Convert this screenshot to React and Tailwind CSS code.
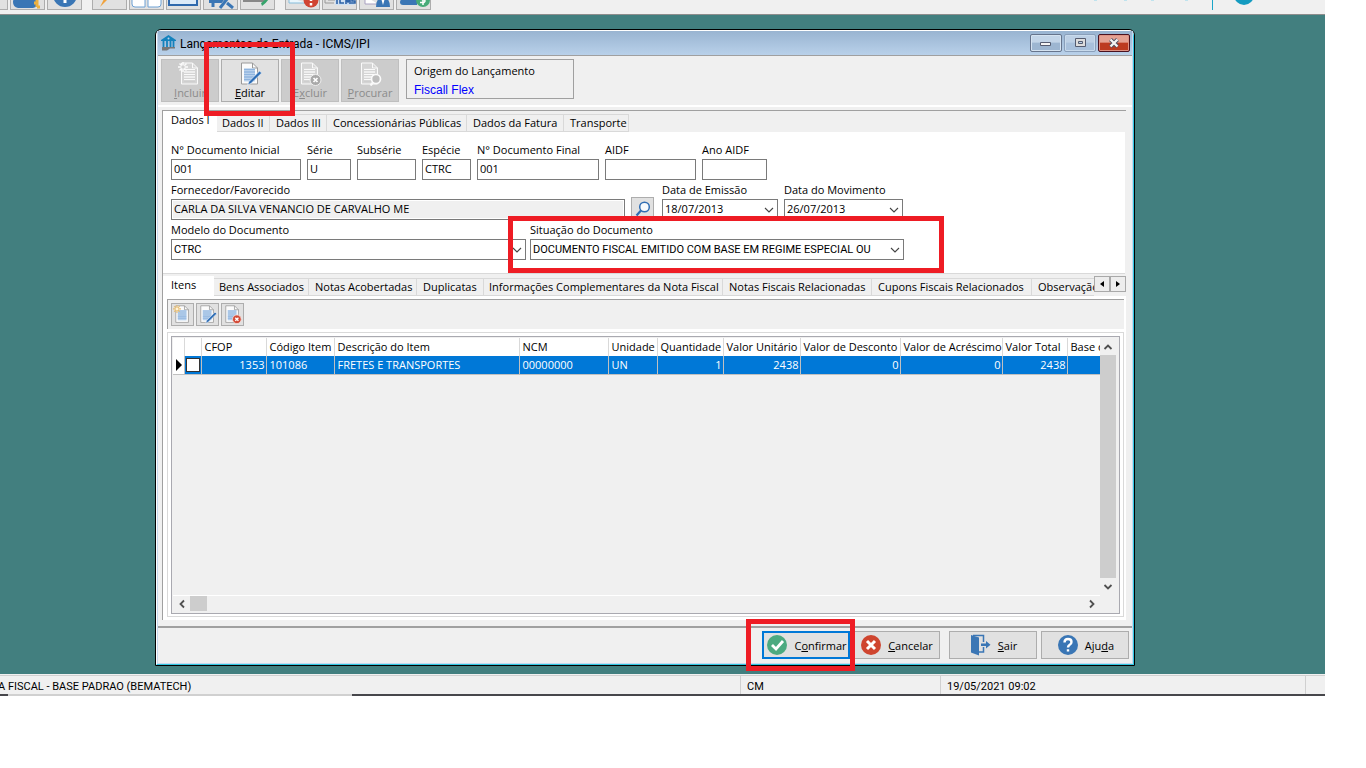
import React from "react";

const UI = "font-['Open_Sans','Noto_Sans',sans-serif]";

function Doc({ children, size = "size-6", dim = false }) {
  return (
    <svg viewBox="0 0 24 24" className={`${size} shrink-0`} aria-hidden="true">
      <path d="M3.500 1h11l5 5v16h-16z" fill={dim ? "#d4d4d4" : "#fbfbfb"} stroke={dim ? "#fafafa" : "#9a9a9a"} />
      <path d="M14.500 1v5h5" fill="none" stroke={dim ? "#fafafa" : "#9a9a9a"} />
      <path d="M6 6.500h11v13H6z" fill={dim ? "#c9c9c9" : "#c4daf1"} />
      <path d="M6 7.500h11M6 10h11M6 12.500h11M6 15h11M6 17.500h11" stroke={dim ? "#fafafa" : "#8fb4de"} strokeWidth="1.300" />
      {children}
    </svg>
  );
}

function DocNew({ dim, size }) {
  return (
    <Doc dim={dim} size={size}>
      <path d="M5 0v10M0 5h10M1.500 1.500l7 7M8.500 1.500l-7 7" stroke={dim ? "#fafafa" : "#e8bd72"} strokeWidth="1.500" />
      <circle cx="5" cy="5" r="1.800" fill={dim ? "#cfcfcf" : "#fff3d6"} />
    </Doc>
  );
}

function DocEdit({ size }) {
  return (
    <Doc size={size}>
      <path d="M9.500 23l1.500-3.500L21.500 9l2.200 2L13 21.500z" fill="#2d6db5" stroke="#eef3fa" strokeWidth=".7" />
    </Doc>
  );
}

function DocDelete({ dim, size }) {
  return (
    <Doc dim={dim} size={size}>
      <circle cx="17.500" cy="18" r="5.500" fill={dim ? "#a9a9a9" : "#d24a36"} stroke={dim ? "#eee" : "#f6dcd8"} />
      <path d="M15.500 16l4 4M19.500 16l-4 4" stroke="#fff" strokeWidth="1.700" />
    </Doc>
  );
}

function DocFind() {
  return (
    <Doc dim>
      <circle cx="18" cy="17" r="4.500" fill="#bdbdbd" stroke="#fafafa" strokeWidth="1.700" />
      <path d="M15 20.500l-2.500 3" stroke="#fafafa" strokeWidth="2.200" />
    </Doc>
  );
}

function Chevron({ className = "" }) {
  return (
    <svg viewBox="0 0 10 6" className={`h-1.5 w-2.5 ${className}`} aria-hidden="true">
      <path d="M1 1l4 4 4-4" fill="none" stroke="#444" strokeWidth="1.100" />
    </svg>
  );
}

const Highlight = ({ className }) => (
  <span aria-hidden="true" className={`pointer-events-none absolute z-10 border-[5px] border-[#ee1c24] ${className}`} />
);

const mainIcons = [
  ["Clientes", "", <><path d="M2 0q0-4 5-6h14q6 2 6 6 0 5-5 6H7q-5-1-5-6z" fill="#3a76b5" /><path d="M26-6v11M23 1h4M26 5h3" stroke="#eeb13f" strokeWidth="3" /></>],
  ["Informações", "", <><circle cx="17" cy="-7" r="12" fill="#3a76b5" /><path d="M17-7v8" stroke="#fff" strokeWidth="3" /></>],
  ["Atalhos", "ml-2", <path d="M17-5L7 5l5-10z" fill="#f0a23c" />],
  ["Livros", "", <path d="M2-6h13v11H5q-3 0-3-3zM18-6h13v8q0 3-3 3H18z" fill="#fff" stroke="#6fa2d5" />],
  ["Monitor", "", <path d="M2-6v9h28v-9" fill="#dceaf8" stroke="#2f69ad" strokeWidth="2" />],
  ["Ajustes", "", <><path d="M5-6h15v7H5z" fill="#3a76b5" /><path d="M9 1v4" stroke="#3a76b5" strokeWidth="3" /><path d="M16 7L28-8" stroke="#e1e1e1" strokeWidth="5" /><path d="M16 6L27-8" stroke="#3a76b5" strokeWidth="3" /><path d="M23 1l6 5" stroke="#3a76b5" strokeWidth="3" /></>],
  ["Exportar", "", <><path d="M3-6v5h20" fill="none" stroke="#888" strokeWidth="2" /><path d="M21 4q6-4 8-10h-4q-1 5-5 7z" fill="#36a36b" /></>],
  ["Alertas", "ml-2", <><path d="M3-5v6h17" fill="#eaf6fc" stroke="#86bddb" /><circle cx="25" cy="-2" r="7.500" fill="#d04432" /><path d="M25-8v7M25 1v2.500" stroke="#fff" strokeWidth="2.500" /></>],
  ["ICMS", "", <><path d="M2-6v7h9M5-2h7" fill="none" stroke="#999" /><path d="M12-4h19v7H12z" fill="#cfe0f2" /><path d="M14-4v6M21-3h-4v4h4M23 2v-5l2 3 2-3v5M32-3h-3v2h3v2h-4" fill="none" stroke="#2d62a7" strokeWidth="1.600" /></>],
  ["Contador", "", <><path d="M5-6v8h13" fill="#fff" stroke="#a9a0c0" /><path d="M8-3h8" stroke="#999" /><path d="M16 5q0-7 4-9h6q4 2 4 9z" fill="#3a76b5" /><path d="M21-4l2 7 2-7z" fill="#fff" /></>],
  ["Financeiro", "", <><path d="M3 0q1-5 7-6h10v9H6q-3 0-3-3z" fill="#3a76b5" /><circle cx="26" cy="-2" r="7" fill="#46ab78" /><path d="M29-5h-4q-2 1 0 2.500h2q2 1.500 0 3h-4M26-8V3" fill="none" stroke="#fff" strokeWidth="1.500" /></>],
];

function MainToolbar() {
  return (
    <header className="flex h-[15px] items-end overflow-hidden border-b border-[#8d8d8d] bg-[#f0f0f0] pb-1">
      <span className="h-10 w-2 shrink-0 border-r border-b border-[#adadad] bg-[#e1e1e1]" />
      <div className="flex gap-0.5 pl-0.5">
        {mainIcons.map(([name, gap, art]) => (
          <button key={name} aria-label={name} className={`flex h-10 w-[35px] items-end border border-[#adadad] bg-[#e1e1e1] ${gap}`}>
            <svg viewBox="0 -31 33 38" className="h-[38px] w-full">{art}</svg>
          </button>
        ))}
      </div>
      <div className="mr-[70px] ml-auto flex items-end">
        <svg viewBox="0 0 120 10" className="h-2.5 w-[120px]" aria-hidden="true">
          <path d="M2 0h3M32 0h3M59 0h3M93 0h3" stroke="#bfe3ee" strokeWidth="2" />
        </svg>
        <span className="mr-5 h-3 w-px shrink-0 bg-[#1aa5c8]" />
        <svg viewBox="0 0 22 10" className="h-2.5 w-[22px]" aria-hidden="true">
          <circle cx="11" cy="-5" r="10" fill="#149bc0" />
        </svg>
      </div>
    </header>
  );
}

function TitleBar() {
  return (
    <div className="flex h-[25px] items-center border-b border-[#a0a0a0] bg-linear-to-b from-[#99b4d1] to-[#b9d1ea] pr-0.5 pl-[3px]">
      <svg viewBox="0 0 15 16" className="h-4 w-[15px]" aria-hidden="true">
        <path d="M0 5l7.500-5L15 5v1H0z" fill="#1382bd" />
        <path d="M2.500 6v6M6 6v6M9.500 6v6M12.500 6v6" stroke="#1382bd" strokeWidth="1.800" />
        <path d="M1 12h13v1.500H9L6 15.500H1z" fill="#777" />
        <circle cx="7.500" cy="3.500" r="1" fill="#b9d1ea" />
      </svg>
      <h1 className="pt-0.5 pl-1 font-['Roboto',sans-serif] text-[12px]">Lançamentos de Entrada - ICMS/IPI</h1>
      <div className="ml-auto flex gap-0.5">
        <button aria-label="Minimizar" className="flex h-[18px] w-8 items-center justify-center rounded-xs border border-[#66748c] bg-linear-to-b from-[#c3d5e8] from-45% to-[#9db6d1] to-50% inset-ring inset-ring-[#d5e3f1]">
          <svg viewBox="0 0 12 8" className="h-2 w-3"><path d="M.5 3.500h10v3H.5z" fill="#f5f5f5" stroke="#555c70" /></svg>
        </button>
        <button aria-label="Maximizar" className="flex h-[18px] w-8 items-center justify-center rounded-xs border border-[#8a9fba] bg-linear-to-b from-[#bdd0e5] from-45% to-[#a9c1dc] to-50% inset-ring inset-ring-[#c8daec]">
          <svg viewBox="0 0 11 10" className="h-2.5 w-[11px]"><path d="M.5.5h10v8H.5z" fill="#ddd" stroke="#555c70" /><path d="M3.500 3.500h4v2h-4z" fill="#b9d1ea" stroke="#555c70" /></svg>
        </button>
        <button aria-label="Fechar" className="flex h-[18px] w-8 items-center justify-center rounded-xs border border-[#4a1220] bg-linear-to-b from-[#e5a192] from-45% to-[#bc3a20] to-50% inset-ring inset-ring-[#dd9284]">
          <svg viewBox="0 0 12 10" className="h-2.5 w-3"><path d="M2.500 1.500l7 7M9.500 1.500l-7 7" stroke="#4d4f63" strokeWidth="4" /><path d="M2.500 1.500l7 7M9.500 1.500l-7 7" stroke="#f4f4f4" strokeWidth="2.300" /></svg>
        </button>
      </div>
    </div>
  );
}

function ToolButton({ icon, children, disabled }) {
  return (
    <button
      disabled={disabled}
      className={`flex h-[43px] w-[58px] flex-col items-center border pt-0.5 leading-[14px] ${disabled ? "border-[#bfbfbf] bg-[#cccccc] text-[#8b8b8b]" : "border-[#adadad] bg-[#e1e1e1] text-black"}`}
    >
      {icon}
      <span>{children}</span>
    </button>
  );
}

function Actions() {
  return (
    <div className="flex h-[51px] items-start border-b-2 border-white pt-[3px] pl-[3px]">
      <div className="flex gap-0.5">
        <ToolButton disabled icon={<DocNew dim />}><u>I</u>ncluir</ToolButton>
        <div className="relative">
          <ToolButton icon={<DocEdit />}><u>E</u>ditar</ToolButton>
          <Highlight className="-top-[17px] -left-[17px] h-[74px] w-[91px]" />
        </div>
        <ToolButton disabled icon={<DocDelete dim />}>E<u>x</u>cluir</ToolButton>
        <ToolButton disabled icon={<DocFind />}><u>P</u>rocurar</ToolButton>
      </div>
      <div className="ml-[7px] h-10 w-[168px] border border-[#a0a0a0] px-[7px] pt-0.5">
        <p className="leading-[18px]">Origem do Lançamento</p>
        <p className="font-['Liberation_Sans',sans-serif] text-[12px] leading-[20px] text-[#0000ff]">Fiscall Flex</p>
      </div>
    </div>
  );
}

function Tab({ active, className, children }) {
  return (
    <button
      role="tab"
      aria-selected={!!active}
      className={`shrink-0 text-left whitespace-nowrap ${active ? "h-full bg-white pb-0.5 pl-2" : "h-[18px] border-t border-r border-b border-[#d9d9d9] pl-[5px]"} ${className}`}
    >
      {children}
    </button>
  );
}

function Field({ label, id, className, children }) {
  return (
    <div className={`relative flex flex-col ${className}`}>
      <label htmlFor={id} className="h-[19px] leading-[20px] whitespace-nowrap">{label}</label>
      {children}
    </div>
  );
}

const box = "h-[21px] w-full border border-[#7a7a7a]";

function TextField({ id, label, value = "", className }) {
  return (
    <Field id={id} label={label} className={className}>
      <input id={id} defaultValue={value} className={`${box} bg-white px-0.5 pb-0.5`} />
    </Field>
  );
}

function DateField({ id, label, value, className }) {
  return (
    <Field id={id} label={label} className={className}>
      <div className={`${box} flex items-center bg-white`}>
        <input id={id} defaultValue={value} className="min-w-0 flex-1 px-0.5" />
        <button type="button" aria-label={`Abrir ${label}`} className="flex w-4 justify-center"><Chevron /></button>
      </div>
    </Field>
  );
}

function SelectField({ id, label, value, className, children }) {
  return (
    <Field id={id} label={label} className={className}>
      <div className="relative flex items-center">
        <select id={id} className={`${box} appearance-none bg-white pt-px pr-4 pl-0.5 font-['Roboto',sans-serif]`}>
          <option>{value}</option>
        </select>
        <Chevron className="pointer-events-none absolute right-1" />
      </div>
      {children}
    </Field>
  );
}

function DocumentForm() {
  return (
    <section>
      <div role="tablist" className="flex h-[21px] items-end">
        <Tab active className="w-[54px]">Dados I</Tab>
        <Tab className="w-[53px]">Dados II</Tab>
        <Tab className="w-[57px]"><span className="pl-px">Dados III</span></Tab>
        <Tab className="w-[140px]"><span className="pl-px">Concessionárias Públicas</span></Tab>
        <Tab className="w-[97px]"><span className="pl-px">Dados da Fatura</span></Tab>
        <Tab className="w-[65px]"><span className="pl-px">Transporte</span></Tab>
      </div>
      <form className="mr-px flex flex-col border-b border-[#d9d9d9] bg-white pt-2 pb-[13px] pl-2">
        <div className="flex h-10 gap-1.5">
          <TextField id="ndi" label="N° Documento Inicial" value="001" className="w-[130px]" />
          <TextField id="serie" label="Série" value="U" className="w-11" />
          <TextField id="subserie" label="Subsérie" className="w-[59px]" />
          <TextField id="especie" label="Espécie" value="CTRC" className="w-[49px]" />
          <TextField id="ndf" label="N° Documento Final" value="001" className="w-[122px]" />
          <TextField id="aidf" label="AIDF" className="w-[91px]" />
          <TextField id="anoaidf" label="Ano AIDF" className="w-[65px]" />
        </div>
        <div className="flex h-10 items-start gap-1.5">
          <Field id="forn" label="Fornecedor/Favorecido" className="w-[454px]">
            <input id="forn" readOnly defaultValue="CARLA DA SILVA VENANCIO DE CARVALHO ME" className={`${box} bg-[#f0f0f0] px-0.5 pb-0.5 inset-ring inset-ring-white`} />
          </Field>
          <button type="button" aria-label="Pesquisar" className="mt-[17px] mr-0.5 flex h-[23px] w-[23px] items-center justify-center border border-[#adadad] bg-[#e1e1e1]">
            <svg viewBox="0 0 16 16" className="size-4"><circle cx="9.500" cy="6" r="4.800" fill="#f7fafd" stroke="#2f6db3" strokeWidth="1.500" /><path d="M6 9.500L1.500 14.500" stroke="#2f6db3" strokeWidth="2.200" /></svg>
          </button>
          <DateField id="emissao" label="Data de Emissão" value="18/07/2013" className="w-[116px]" />
          <DateField id="mov" label="Data do Movimento" value="26/07/2013" className="w-[119px]" />
        </div>
        <div className="flex h-10 gap-1">
          <SelectField id="modelo" label="Modelo do Documento" value="CTRC" className="w-[355px]" />
          <SelectField id="situacao" label="Situação do Documento" value="DOCUMENTO FISCAL EMITIDO COM BASE EM REGIME ESPECIAL OU" className="w-[374px]">
            <Highlight className="-top-1 -left-[22px] h-[57px] w-[436px]" />
          </SelectField>
        </div>
      </form>
    </section>
  );
}

const cols = [
  ["w-[11px]", "", ""],
  ["w-[17px]", "", ""],
  ["w-[65px]", "CFOP", "1353", true],
  ["w-[68px]", "Código Item", "101086"],
  ["w-[185px]", "Descrição do Item", "FRETES E TRANSPORTES"],
  ["w-[89px]", "NCM", "00000000"],
  ["w-[49px]", "Unidade", "UN"],
  ["w-[66px]", "Quantidade", "1", true],
  ["w-[77px]", "Valor Unitário", "2438", true],
  ["w-[100px]", "Valor de Desconto", "0", true],
  ["w-[102px]", "Valor de Acréscimo", "0", true],
  ["w-[65px]", "Valor Total", "2438", true],
  ["w-auto", "Base de Cálculo", ""],
];

function Arrow({ d }) {
  return <svg viewBox="0 0 10 10" className="size-2.5" aria-hidden="true"><path d={d} fill="none" stroke="#505050" strokeWidth="1.800" /></svg>;
}

function ItemsGrid() {
  return (
    <div className="border border-[#a9a9b0] bg-[#f0f0f0] pt-px pl-px">
      <div className="flex">
        <div className="min-w-0 flex-1 overflow-hidden">
          <table className="w-full table-fixed border-collapse">
            <colgroup>{cols.map(([w], i) => <col key={i} className={w} />)}</colgroup>
            <thead>
              <tr className="h-[18px] bg-white text-left">
                {cols.map(([, name], i) => (
                  <th key={i} className="h-[18px] overflow-hidden border-r border-[#d9d9d9] p-0 pl-[3px] font-normal whitespace-nowrap last:border-r-0">{name}</th>
                ))}
              </tr>
            </thead>
            <tbody>
              <tr className="bg-[#0078d7] text-white">
                {cols.map(([, , v, right], i) => (
                  <td key={i} className={`h-[18px] overflow-hidden border-r border-b border-[#c0c0c0] p-0 leading-[17px] whitespace-nowrap last:border-r-0 ${right ? "pr-px text-right" : i > 1 ? "pl-[3px]" : ""} ${i === 0 ? "bg-white" : ""}`}>
                    {i === 0 ? (
                      <svg viewBox="0 0 10 12" className="h-3 w-2.5"><path d="M3 0l6 6-6 6z" fill="#000" /></svg>
                    ) : i === 1 ? (
                      <input type="checkbox" aria-label="Selecionar item" className="mx-auto block size-3.5 appearance-none border border-[#333] bg-white" />
                    ) : v}
                  </td>
                ))}
              </tr>
            </tbody>
          </table>
        </div>
        <div className="flex h-[257px] w-[19px] flex-col items-start">
          <button aria-label="Rolar para cima" className="flex h-[17px] w-4 items-center justify-center"><Arrow d="M1.500 7L5 3.500 8.500 7" /></button>
          <span className="w-4 flex-1 bg-[#cdcdcd]" />
          <button aria-label="Rolar para baixo" className="flex h-[17px] w-4 items-center justify-center"><Arrow d="M1.500 3L5 6.500 8.500 3" /></button>
        </div>
      </div>
      <div className="mr-[19px] flex h-[18px] items-start border-t border-white">
        <button aria-label="Rolar para a esquerda" className="flex h-4 w-[17px] items-center justify-center"><Arrow d="M7 1.500L3.500 5 7 8.500" /></button>
        <span className="h-[15px] w-[17px] bg-[#cdcdcd]" />
        <button aria-label="Rolar para a direita" className="ml-auto flex h-4 w-4 items-center justify-center"><Arrow d="M3 1.500L6.500 5 3 8.500" /></button>
      </div>
    </div>
  );
}

function Items() {
  const mini = "flex h-[23px] w-[23px] items-center justify-center border border-[#adadad] bg-[#e1e1e1]";
  return (
    <section className="pt-0.5">
      <div className="flex h-[20px] items-end">
        <div role="tablist" className="flex h-full min-w-0 flex-1 items-end overflow-hidden">
          <Tab active className="w-[51px]">Itens</Tab>
          <Tab className="w-[95px]">Bens Associados</Tab>
          <Tab className="w-[108px]"><span className="pl-px">Notas Acobertadas</span></Tab>
          <Tab className="w-[67px]"><span className="pl-px">Duplicatas</span></Tab>
          <Tab className="w-[239px]">Informações Complementares da Nota Fiscal</Tab>
          <Tab className="w-[149px]"><span className="pl-px">Notas Fiscais Relacionadas</span></Tab>
          <Tab className="w-[160px]"><span className="pl-px">Cupons Fiscais Relacionados</span></Tab>
          <Tab className="w-[90px]"><span className="pl-px">Observação</span></Tab>
        </div>
        <div className="flex h-full items-start">
          <button aria-label="Abas anteriores" className="flex h-4 w-4 items-center justify-center border border-[#a9a9a9] bg-[#ededed]"><svg viewBox="0 0 4 6" className="h-1.5 w-1"><path d="M4 0L0 3l4 3z" /></svg></button>
          <button aria-label="Próximas abas" className="flex h-4 w-4 items-center justify-center border border-[#a9a9a9] bg-[#ededed]"><svg viewBox="0 0 4 6" className="h-1.5 w-1"><path d="M0 0l4 3-4 3z" /></svg></button>
        </div>
      </div>
      <div className="bg-white pt-[3px] pr-0.5 pb-[3px] pl-1">
        <div className="flex gap-0.5 border-t border-l border-[#a0a0a0] bg-[#f0f0f0] py-[3px] pl-[3px]">
          <button aria-label="Incluir item" className={mini}><DocNew size="size-[19px]" /></button>
          <button aria-label="Editar item" className={mini}><DocEdit size="size-[19px]" /></button>
          <button aria-label="Excluir item" className={mini}><DocDelete size="size-[19px]" /></button>
        </div>
        <div className="mt-[3px] border border-[#d9d9d9] p-[3px] pb-0.5">
          <ItemsGrid />
        </div>
      </div>
    </section>
  );
}

function FooterButton({ icon, focus, children }) {
  return (
    <button className={`flex h-7 w-[88px] items-center justify-center gap-[7px] bg-[#e1e1e1] pl-0.5 ${focus ? "border-2 border-[#0078d7]" : "border border-[#adadad]"}`}>
      {icon}
      <span className="pt-0.5">{children}</span>
    </button>
  );
}

function Footer() {
  return (
    <footer className="flex h-[37px] items-start justify-end border-t-2 border-[#a0a0a0] pt-[3px] pr-[3px]">
      <div className="relative mr-0.5">
        <FooterButton focus icon={<svg viewBox="0 0 20 20" className="size-5 shrink-0"><circle cx="10" cy="10" r="10" fill="#4caa80" /><path d="M5 10l4 4 7-8" fill="none" stroke="#fff" strokeWidth="2.800" /></svg>}>
          C<u>o</u>nfirmar
        </FooterButton>
        <Highlight className="-top-3 -left-4 h-[52px] w-[109px]" />
      </div>
      <div className="mr-[9px]">
        <FooterButton icon={<svg viewBox="0 0 20 20" className="size-5 shrink-0"><circle cx="10" cy="10" r="10" fill="#cf452f" /><path d="M6 6l8 8M14 6l-8 8" stroke="#fff" strokeWidth="3" /></svg>}>
          <u>C</u>ancelar
        </FooterButton>
      </div>
      <div className="mr-1">
        <FooterButton icon={<svg viewBox="0 0 20 22" className="h-[22px] w-5 shrink-0"><path d="M2 1.500h10.500V8M12.500 13v5H8" fill="none" stroke="#3a76b5" strokeWidth="1.500" /><path d="M0 1l8 2.500V21.500L0 18.500z" fill="#3a76b5" /><path d="M10 9.500h5V7l4.500 3.800-4.500 3.700V12h-5z" fill="#3a76b5" /></svg>}>
          <u>S</u>air
        </FooterButton>
      </div>
      <FooterButton icon={<svg viewBox="0 0 20 20" className="size-5 shrink-0"><circle cx="10" cy="10" r="10" fill="#3a76b5" /><path d="M6.500 7.500q0-3.500 3.500-3.500t3.500 3q0 2-2 3-1.500 1-1.500 2.500M10 14.200v2.300" fill="none" stroke="#fff" strokeWidth="2.400" /></svg>}>
        Aju<u>d</u>a
      </FooterButton>
    </footer>
  );
}

function StatusBar() {
  return (
    <div className="bg-[#f0f0f0] pt-px font-['Roboto',sans-serif]">
      <div className="flex h-[19px] border-t border-[#d0d0d0] leading-[22px]">
        <span className="w-[741px] border-r border-[#d0d0d0]"><span className="-ml-0.5">A FISCAL - BASE PADRAO (BEMATECH)</span></span>
        <span className="w-[200px] border-r border-[#d0d0d0] pl-1.5">CM</span>
        <span className="flex-1 border-r border-[#d0d0d0] pl-1.5">19/05/2021 09:02</span>
        <span className="w-[19px]" />
      </div>
      <div className="flex h-0.5 bg-[#47474b]"><span className="ml-2 w-[344px] bg-[#d0d0d0]" /></div>
    </div>
  );
}

export default function App() {
  return (
    <div className={`bg-white text-[11px] text-black ${UI}`}>
      <div className="mr-[41px]">
        <MainToolbar />
        <main className="bg-[#427f7f] pt-3.5 pr-[190px] pb-2 pl-[155px]">
          <div className="rounded-t-md border border-black bg-[#f0f0f0]">
            <div className="rounded-t-md border border-t-white border-r-[#2fc6e0] border-b-[#2fc6e0] border-l-white">
              <div className="border-x border-b border-[#c6d8ee]">
                <TitleBar />
                <Actions />
                <div className="mt-[3px] mr-1.5 mb-1.5 ml-1 border-t border-l border-[#a0a0a0]">
                  <DocumentForm />
                  <Items />
                </div>
                <Footer />
              </div>
            </div>
          </div>
        </main>
        <StatusBar />
      </div>
    </div>
  );
}
